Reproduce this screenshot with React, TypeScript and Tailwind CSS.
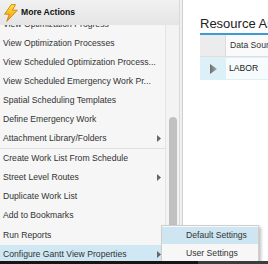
const items = [
  { label: 'View Optimization Progress' },
  { label: 'View Optimization Processes' },
  { label: 'View Scheduled Optimization Process...' },
  { label: 'View Scheduled Emergency Work Pr...' },
  { label: 'Spatial Scheduling Templates' },
  { label: 'Define Emergency Work' },
  { label: 'Attachment Library/Folders', sub: true, divider: true },
  { label: 'Create Work List From Schedule' },
  { label: 'Street Level Routes', sub: true },
  { label: 'Duplicate Work List' },
  { label: 'Add to Bookmarks' },
  { label: 'Run Reports' },
  { label: 'Configure Gantt View Properties', sub: true, active: true },
];

const Bolt = () => (
  <svg width="16" height="18" viewBox="0 0 16 18">
    <defs>
      <linearGradient id="bolt" x1="0" y1="0" x2="0" y2="1">
        <stop offset="0" stopColor="#ffe14a" />
        <stop offset="1" stopColor="#f39a00" />
      </linearGradient>
    </defs>
    <path
      d="M8.2 0.6 L1.6 10.2 L6.2 10.2 L3.8 17.4 L14.4 6.2 L9.4 6.2 L12.6 0.6 Z"
      fill="url(#bolt)"
      stroke="#c77a00"
      strokeWidth="0.8"
      strokeLinejoin="round"
    />
  </svg>
);

const SubArrow = () => (
  <svg width="4" height="7" viewBox="0 0 4 7" className="shrink-0">
    <path d="M0 0 L4 3.5 L0 7 Z" fill="#666" />
  </svg>
);

export default function App() {
  return (
    <div className="flex h-[264px] w-[268px] flex-col overflow-hidden bg-white font-['Liberation_Sans',Arial,sans-serif]">
      <div className="relative flex h-[261px] overflow-hidden">
        <aside className="flex w-[179px] flex-col bg-[#f6f6f6]">
          <div className="flex h-[25px] shrink-0 items-center gap-[2px] bg-gradient-to-b from-[#f1f1f1] to-[#e5e5e5] pl-[3px]">
            <Bolt />
            <span className="text-[8.6px] font-bold text-[#111]">More Actions</span>
          </div>

          <div className="flex min-h-0 flex-1">
            <div className="w-[165px] overflow-hidden">
              <ul className="mt-[-10.6px]">
                {items.map((item) => (
                  <li
                    key={item.label}
                    className={`flex h-[19.2px] items-center gap-1 pl-[3px] pr-[4px] text-[8.65px] whitespace-nowrap text-[#333] ${
                      item.divider ? 'border-b border-[#e0e0e0]' : ''
                    } ${item.active ? 'bg-[#cfe8f3]' : ''}`}
                  >
                    <span className="min-w-0 flex-1">{item.label}</span>
                    {item.sub && <SubArrow />}
                  </li>
                ))}
              </ul>
            </div>

            {/* scrollbar */}
            <div className="flex w-[14px] flex-col border-l border-[#e4e4e4] bg-[#f3f3f3] pt-[92px]">
              <div className="ml-[3px] h-[108px] w-[8px] rounded-t-full bg-[#c1c1c1]" />
            </div>
          </div>
        </aside>

        <div className="w-[4px] border-l border-[#dadada] border-r border-r-[#cfcfcf] bg-[#f0f0f0]" />

        <main className="min-w-0 flex-1 overflow-hidden bg-white pl-[17px]">
          <h2 className="h-[33px] whitespace-nowrap pt-[16px] text-[13px] leading-[15px] text-[#222]">
            Resource Assignments
          </h2>
          <div className="border-t-2 border-[#3d9ad6]">
            <div className="flex h-[22px] border-b border-[#dedede]">
              <div className="w-[26px] shrink-0 border-r border-[#dcdcdc] bg-[#ececec]" />
              <div className="flex flex-1 items-center whitespace-nowrap bg-[#fafafa] pl-[4px] text-[8.65px] text-[#333]">
                Data Source
              </div>
            </div>
            <div className="flex h-[23px] bg-[#dcf0f8]">
              <div className="flex w-[26px] shrink-0 items-center justify-center">
                <svg width="7" height="10" viewBox="0 0 7 10">
                  <defs>
                    <linearGradient id="tri" x1="0" y1="0" x2="1" y2="0">
                      <stop offset="0" stopColor="#6f6f6f" />
                      <stop offset="1" stopColor="#a5a5a5" />
                    </linearGradient>
                  </defs>
                  <path d="M0 0 L7 5 L0 10 Z" fill="url(#tri)" />
                </svg>
              </div>
              <div className="my-[1px] flex flex-1 items-center bg-[#f7fbfd] pl-[3px] text-[8.65px] text-[#222]">
                LABOR
              </div>
            </div>
          </div>
        </main>

        {/* submenu */}
        <div className="absolute left-[161px] top-[225px] w-[98px] border border-[#cfcfcf] bg-[#f7f7f7] py-[1px] shadow-[2px_2px_3px_rgba(0,0,0,0.25)]">
          <div className="flex h-[17px] items-center bg-[#cde6f1] pl-[24px] text-[8.65px] text-[#333]">
            Default Settings
          </div>
          <div className="flex h-[19px] items-center pl-[24px] text-[8.65px] text-[#333]">
            User Settings
          </div>
        </div>
      </div>

      <div className="flex h-[3px] shrink-0">
        <div className="w-[198px] bg-[#151515]" />
        <div className="flex-1 bg-[#3c3c3c]" />
      </div>
    </div>
  );
}
